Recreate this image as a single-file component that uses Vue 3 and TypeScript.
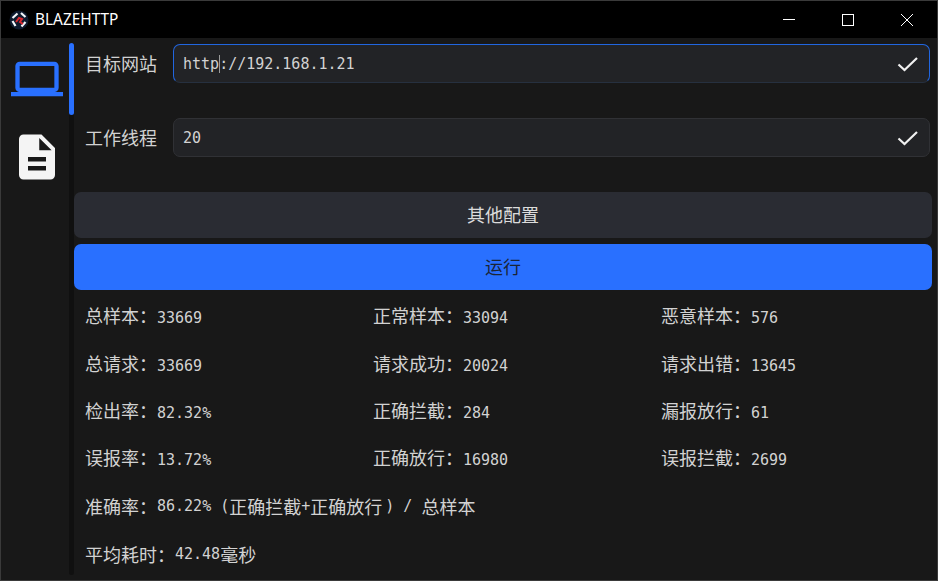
<script setup lang="ts">
interface Stat { label: string; value: string }
const rows: Stat[][] = [
  [{ label: '总样本：', value: '33669' }, { label: '正常样本：', value: '33094' }, { label: '恶意样本：', value: '576' }],
  [{ label: '总请求：', value: '33669' }, { label: '请求成功：', value: '20024' }, { label: '请求出错：', value: '13645' }],
  [{ label: '检出率：', value: '82.32%' }, { label: '正确拦截：', value: '284' }, { label: '漏报放行：', value: '61' }],
  [{ label: '误报率：', value: '13.72%' }, { label: '正确放行：', value: '16980' }, { label: '误报拦截：', value: '2699' }],
]
</script>

<template>
  <div class="window">
    <header class="titlebar">
      <svg class="logo" width="20" height="20" viewBox="0 0 20 20">
        <circle cx="10" cy="10" r="9.500" fill="#0e1a2e" />
        <path d="M3.500 8l5-4.500M3.500 11l3 5M12 3l4.500 4M16.500 12l-4 4.500" stroke="#f2f6fa" stroke-width="2.200" fill="none" />
        <path d="M7 12l3-4 3 1-2 3 3 2" stroke="#d9272e" stroke-width="2" fill="none" />
      </svg>
      <span class="title">BLAZEHTTP</span>
      <div class="controls">
        <svg width="46" height="38" viewBox="0 0 46 38"><path d="M17 18.500h12" stroke="#fff" fill="none" /></svg>
        <svg width="46" height="38" viewBox="0 0 46 38"><rect x="17.500" y="13.500" width="11" height="11" stroke="#fff" fill="none" /></svg>
        <svg width="46" height="38" viewBox="0 0 46 38"><path d="M17 13l12 12M29 13L17 25" stroke="#fff" fill="none" /></svg>
      </div>
    </header>
    <div class="body">
      <nav class="side">
        <svg class="ico" width="52" height="52" viewBox="0 0 24 24">
          <path fill="#2970ff" d="M20 18c1.100 0 2-.9 2-2V6c0-1.100-.9-2-2-2H4c-1.100 0-2 .9-2 2v10c0 1.100.9 2 2 2H0v2h24v-2h-4zM4 6h16v10H4V6z" />
        </svg>
        <svg class="ico doc" width="54" height="54" viewBox="0 0 24 24">
          <path fill="#f4f4f4" d="M14 2H6c-1.100 0-2 .9-2 2v16c0 1.100.9 2 2 2h12c1.100 0 2-.9 2-2V8l-6-6zm2 16H8v-2h8v2zm0-4H8v-2h8v2zm-3-5V3.500L18.500 9H13z" />
        </svg>
      </nav>
      <div class="strip"><div class="thumb"></div></div>
      <main class="main">
        <div class="field">
          <label>目标网站</label>
          <div class="input active">
            <span class="mono">http<i class="caret"></i>://192.168.1.21</span>
            <svg class="check" width="22" height="16" viewBox="0 0 22 16"><path d="M1.500 8.500l6 5.500L20 2" stroke="#f0f0f0" stroke-width="2.200" fill="none" /></svg>
          </div>
        </div>
        <div class="field second">
          <label>工作线程</label>
          <div class="input">
            <span class="mono">20</span>
            <svg class="check" width="22" height="16" viewBox="0 0 22 16"><path d="M1.500 8.500l6 5.500L20 2" stroke="#f0f0f0" stroke-width="2.200" fill="none" /></svg>
          </div>
        </div>
        <button class="btn other">其他配置</button>
        <button class="btn run">运行</button>
        <section class="stats">
          <div v-for="(row, i) in rows" :key="i" class="row grid">
            <div v-for="s in row" :key="s.label">{{ s.label }}<span class="mono">{{ s.value }}</span></div>
          </div>
          <div class="row"><span>准确率：</span><span class="mono">86.22% (</span><span>正确拦截</span><span class="mono">+</span><span>正确放行</span><span class="mono tail">) / </span><span>总样本</span></div>
          <div class="row"><span>平均耗时：</span><span class="mono">42.48</span><span>毫秒</span></div>
        </section>
      </main>
    </div>
  </div>
</template>

<style scoped>
.window {
  width: 938px;
  height: 581px;
  box-sizing: border-box;
  border: 1px solid #3a3a3a;
  background: #181818;
  color: #d2d2d2;
  font: 18px/1 "Noto Sans CJK SC", sans-serif;
  display: flex;
  flex-direction: column;
  overflow: hidden;
}
.titlebar {
  height: 37px;
  flex: none;
  background: #000;
  display: flex;
  align-items: center;
  padding-left: 8px;
}
.title {
  margin-left: 6px;
  color: #fff;
  font: 15.400px "Noto Sans", sans-serif;
}
.controls {
  margin-left: auto;
  display: flex;
  margin-right: 7px;
  gap: 13px;
}
.controls svg { display: block; }
.body { flex: 1; display: flex; min-height: 0; }
.side {
  width: 68px;
  flex: none;
  display: flex;
  flex-direction: column;
  align-items: center;
  padding-top: 15px;
}
.ico { display: block; margin-left: 4px; }
.doc { margin-top: 25px; margin-left: 3px; }
.strip {
  width: 5px;
  flex: none;
  margin-top: 5px;
  height: 532px;
  background: #101010;
  border-radius: 3px;
}
.thumb { height: 72px; background: #2970ff; border-radius: 3px; }
.main { flex: 1; min-width: 0; padding-top: 6px; }
.field {
  display: flex;
  align-items: center;
  margin-right: 7px;
  padding-left: 11px;
}
.field.second { margin-top: 35px; margin-bottom: 35px; }
.field label { width: 88px; flex: none; padding-bottom: 2px; }
.input {
  flex: 1;
  height: 39px;
  box-sizing: border-box;
  border: 1px solid #303135;
  border-radius: 7px;
  background: #222326;
  display: flex;
  align-items: center;
  padding: 0 10px 0 9px;
}
.input.active { border-color: #2166e0; border-bottom-color: #26303f; }
.check { margin-left: auto; }
.caret {
  display: inline-block;
  width: 1px;
  height: 18px;
  margin: 0 -1px 0 0;
  vertical-align: -4px;
  background: #9a9a9a;
}
.mono { font: 15px "DejaVu Sans Mono", monospace; white-space: pre; }
.tail { margin-left: 3px; }
.btn {
  display: block;
  width: 858px;
  height: 46px;
  border: 0;
  border-radius: 7px;
  font: inherit;
  color: inherit;
  padding: 0 0 2px;
}
.other { background: #2a2c33; color: #dcdcdc; }
.run { background: #2970ff; margin-top: 6px; color: #1a2436; }
.stats { padding: 3px 0 0 11px; }
.row { height: 47.400px; display: flex; align-items: center; white-space: pre; }
.grid { display: grid; grid-template-columns: 288px 288px 1fr; }
</style>
